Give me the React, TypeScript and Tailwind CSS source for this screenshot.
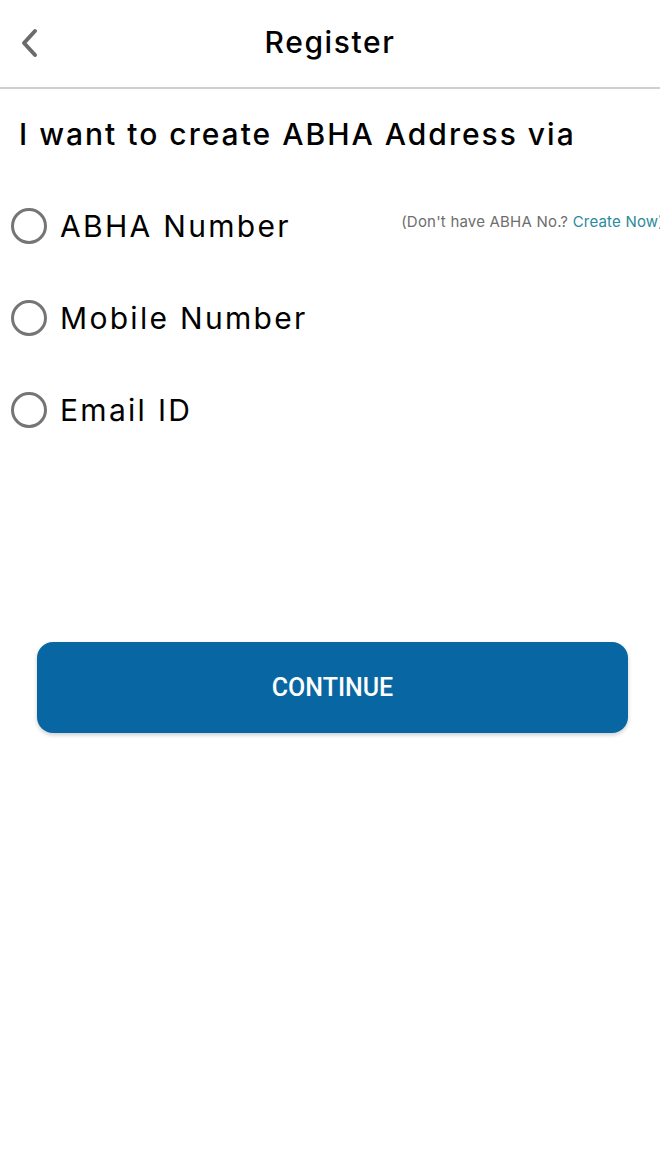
import React, { useState } from "react";

const font = { fontFamily: '"Inter", "Noto Sans", sans-serif' };

function Radio({ checked }: { checked: boolean }) {
  return (
    <span className="flex h-[36px] w-[36px] shrink-0 items-center justify-center rounded-full border-[3px] border-[#757575]">
      {checked && <span className="h-[18px] w-[18px] rounded-full bg-[#0867a2]" />}
    </span>
  );
}

export default function App() {
  const [sel, setSel] = useState<string | null>(null);
  const options = ["ABHA Number", "Mobile Number", "Email ID"];
  return (
    <div className="min-h-[1173px] w-[660px] overflow-hidden bg-white" style={font}>
      <div className="relative flex h-[89px] items-center justify-center border-b-[2px] border-[#cfcfcf]">
        <button className="absolute left-[18px] top-[27px] flex h-[32px] w-[22px] items-center justify-center">
          <svg width="20" height="30" viewBox="0 0 20 30" fill="none">
            <path d="M16 3 L5 15 L16 27" stroke="#6b6b6b" strokeWidth="4" strokeLinecap="round" strokeLinejoin="round" />
          </svg>
        </button>
        <h1 className="-translate-y-[2px] text-[30px] font-medium leading-none tracking-[1.6px] text-black">Register</h1>
      </div>
      <div className="px-[19px] pt-[27px]">
        <p className="whitespace-nowrap text-[30px] font-medium leading-[36px] tracking-[2px] text-black">I want to create ABHA Address via</p>
      </div>
      <div className="mt-[56px] flex flex-col gap-[56px] pl-[11px]">
        {options.map((o, i) => (
          <div key={o} className="flex h-[36px] items-center" onClick={() => setSel(o)}>
            <Radio checked={sel === o} />
            <span className="ml-[13px] whitespace-nowrap text-[30px] leading-none tracking-[2.3px] text-black">{o}</span>
            {i === 0 && (
              <span className="ml-auto -translate-y-[4px] translate-x-[4px] whitespace-nowrap text-[15px] tracking-[0.2px] text-[#6e6e6e]">
                (Don't have ABHA No.? <span className="text-[#2a8a9c]">Create Now)</span>
              </span>
            )}
          </div>
        ))}
      </div>
      <div className="mt-[214px] pl-[37px] pr-[32px]">
        <button className="flex h-[91px] w-full items-center justify-center rounded-[16px] bg-[#0867a2] shadow-[0_2px_4px_rgba(0,0,0,0.2)]">
          <span className="text-[25px] font-medium text-white" style={{ fontFamily: "Roboto, sans-serif" }}>CONTINUE</span>
        </button>
      </div>
    </div>
  );
}
